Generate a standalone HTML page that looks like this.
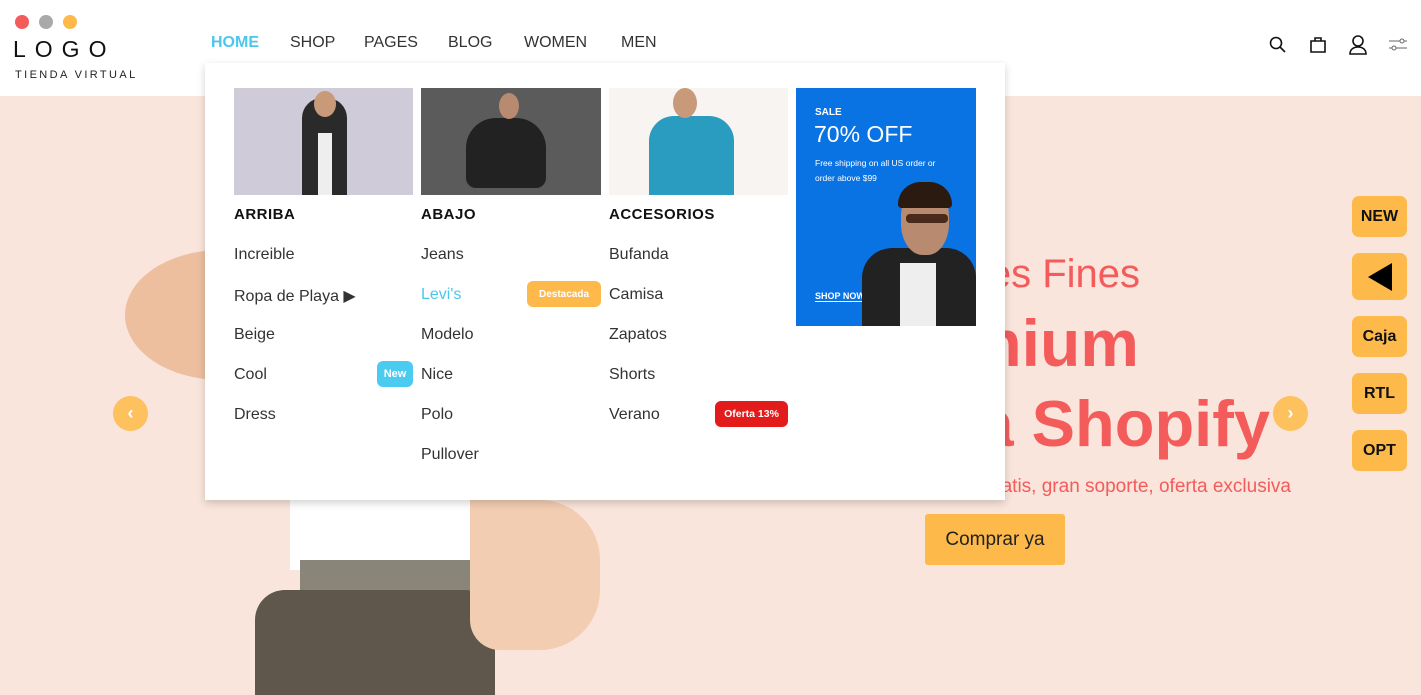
<!DOCTYPE html>
<html><head><meta charset="utf-8"><style>
*{margin:0;padding:0;box-sizing:border-box}
body{width:1421px;height:695px;overflow:hidden;position:relative;font-family:"Liberation Sans",sans-serif;background:#fff;color:#222}
.hero{position:absolute;left:0;top:96px;width:1421px;height:599px;background:#f9e5db}
.abs{position:absolute}
.nav a{position:absolute;top:34px;font-size:16px;color:#333;text-decoration:none;letter-spacing:0}
.red{color:#f45b5b;white-space:nowrap;text-align:right}
.side{position:absolute;left:1352px;width:55px;background:#fdb94a;border-radius:7px;font-weight:bold;font-size:16px;color:#111;display:flex;align-items:center;justify-content:center}
.drop{position:absolute;left:205px;top:63px;width:800px;height:437px;background:#fff;box-shadow:0 3px 8px rgba(0,0,0,.18)}
.col{position:absolute;top:0}
.col h4{position:absolute;top:143px;font-size:15px;font-weight:bold;color:#111;letter-spacing:.5px;white-space:nowrap}
.col div{position:absolute;font-size:16px;color:#333;white-space:nowrap}
.badge{position:absolute;display:flex;align-items:center;justify-content:center;font-size:11px;font-weight:bold;color:#fff;border-radius:6px;height:26px;white-space:nowrap}
.arrow{position:absolute;width:35px;height:35px;border-radius:50%;background:#fdc15d;color:#fff;font-weight:bold;font-size:18px;display:flex;align-items:center;justify-content:center}
</style></head><body>
<div class="hero"></div>
<div class="abs" style="left:125px;top:250px;width:160px;height:130px;background:#edbf9f;border-radius:60% 0 0 60%/50% 0 0 50%"></div>
<div class="abs" style="left:290px;top:490px;width:200px;height:80px;background:#fff"></div>
<div class="abs" style="left:300px;top:560px;width:180px;height:40px;background:#8a8579"></div>
<div class="abs" style="left:255px;top:590px;width:240px;height:105px;background:#5f564c;border-radius:30px 30px 0 0"></div>
<div class="abs" style="left:470px;top:500px;width:130px;height:150px;background:#f3cdb2;border-radius:0 60px 60px 30px"></div>

<div class="abs" style="left:15px;top:15px;width:14px;height:14px;border-radius:50%;background:#f45b5b"></div>
<div class="abs" style="left:39px;top:15px;width:14px;height:14px;border-radius:50%;background:#a9a9a9"></div>
<div class="abs" style="left:63px;top:15px;width:14px;height:14px;border-radius:50%;background:#fdb94a"></div>
<div class="abs" style="left:13px;top:36px;font-size:23px;letter-spacing:9px;color:#111">LOGO</div>
<div class="abs" style="left:15px;top:69px;font-size:11px;letter-spacing:2.4px;color:#222">TIENDA VIRTUAL</div>
<div class="nav">
<a style="left:211px;color:#4bc7ec;font-weight:bold">HOME</a>
<a style="left:290px">SHOP</a>
<a style="left:364px">PAGES</a>
<a style="left:448px">BLOG</a>
<a style="left:524px">WOMEN</a>
<a style="left:621px">MEN</a>
</div>
<svg class="abs" style="left:1268px;top:35px" width="20" height="20" viewBox="0 0 20 20" fill="none" stroke="#111" stroke-width="1.6"><circle cx="8" cy="8" r="5.5"/><path d="M12 12l5 5"/></svg>
<svg class="abs" style="left:1308px;top:34px" width="20" height="20" viewBox="0 0 20 20" fill="none" stroke="#111" stroke-width="1.6"><path d="M3 7h14v11H3z"/><path d="M7 7V4h6v3"/></svg>
<svg class="abs" style="left:1347px;top:34px" width="22" height="22" viewBox="0 0 22 22" fill="none" stroke="#111" stroke-width="1.6"><circle cx="11" cy="7" r="5"/><path d="M3 20c0-5 4-7 8-7s8 2 8 7z"/></svg>
<svg class="abs" style="left:1388px;top:37px" width="20" height="16" viewBox="0 0 20 16" fill="none" stroke="#666" stroke-width="1"><path d="M1 4h18M1 11h18"/><circle cx="14" cy="4" r="2" fill="#fff"/><circle cx="6" cy="11" r="2" fill="#fff"/></svg>

<div class="abs red" style="right:281px;top:252px;font-size:40px">Materiales Fines</div>
<div class="abs red" style="right:282px;top:305px;font-size:66px;font-weight:bold">Premium</div>
<div class="abs red" style="right:151px;top:386px;font-size:65px;font-weight:bold">Tema Shopify</div>
<div class="abs red" style="right:130px;top:476px;font-size:19px">Envío gratis, gran soporte, oferta exclusiva</div>
<div class="abs" style="left:925px;top:514px;width:140px;height:51px;background:#fdb94a;border-radius:3px;font-size:19px;color:#222;display:flex;align-items:center;justify-content:center">Comprar ya</div>
<div class="arrow" style="left:113px;top:396px">‹</div>
<div class="arrow" style="left:1273px;top:396px">›</div>

<div class="side" style="top:196px;height:41px">NEW</div>
<div class="side" style="top:253px;height:47px"><svg width="28" height="32"><path d="M2 16L26 2v28z" fill="#000"/></svg></div>
<div class="side" style="top:316px;height:41px">Caja</div>
<div class="side" style="top:373px;height:41px">RTL</div>
<div class="side" style="top:430px;height:41px">OPT</div>

<div class="drop">
 <div class="col" style="left:29px">
  <div style="top:25px;width:179px;height:107px;background:#cfcbd8"><div style="left:68px;top:10px;width:45px;height:97px;background:#2a2a2a;border-radius:20px 20px 0 0"></div><div style="left:80px;top:3px;width:22px;height:26px;background:#c99a7a;border-radius:50%"></div><div style="left:84px;top:45px;width:14px;height:62px;background:#eee"></div></div>
  <h4>ARRIBA</h4>
  <div style="top:183px">Increible</div>
  <div style="top:223px">Ropa de Playa ▶</div>
  <div style="top:263px">Beige</div>
  <div style="top:303px">Cool</div>
  <span class="badge" style="left:143px;top:298px;width:36px;background:#4ccbf0">New</span>
  <div style="top:343px">Dress</div>
 </div>
 <div class="col" style="left:216px">
  <div style="top:25px;width:180px;height:107px;background:#5b5b5b"><div style="left:45px;top:30px;width:80px;height:70px;background:#222;border-radius:30px 30px 10px 10px"></div><div style="left:78px;top:5px;width:20px;height:26px;background:#b88b70;border-radius:50%"></div></div>
  <h4>ABAJO</h4>
  <div style="top:183px">Jeans</div>
  <div style="top:223px;color:#4bc7ec">Levi's</div>
  <span class="badge" style="left:106px;top:218px;width:74px;background:#fdb94a;font-size:10px">Destacada</span>
  <div style="top:263px">Modelo</div>
  <div style="top:303px">Nice</div>
  <div style="top:343px">Polo</div>
  <div style="top:383px">Pullover</div>
 </div>
 <div class="col" style="left:404px">
  <div style="top:25px;width:179px;height:107px;background:#f7f4f2"><div style="left:40px;top:28px;width:85px;height:79px;background:#2a9cc0;border-radius:25px 25px 0 0"></div><div style="left:64px;top:0px;width:24px;height:30px;background:#c99a7a;border-radius:50%"></div></div>
  <h4>ACCESORIOS</h4>
  <div style="top:183px">Bufanda</div>
  <div style="top:223px">Camisa</div>
  <div style="top:263px">Zapatos</div>
  <div style="top:303px">Shorts</div>
  <div style="top:343px">Verano</div>
  <span class="badge" style="left:106px;top:338px;width:73px;background:#e41b1b;font-size:10.5px">Oferta 13%</span>
 </div>
 <div class="col" style="left:591px;top:25px;width:180px;height:238px;background:#0a73e3;overflow:hidden">
  <div style="left:19px;top:19px;font-size:10px;color:#fff;font-weight:bold">SALE</div>
  <div style="left:18px;top:33px;font-size:23px;color:#fff">70% OFF</div>
  <div style="left:19px;top:68px;font-size:8.5px;color:#fff;line-height:15px">Free shipping on all US order or<br>order above $99</div>
  <div style="left:19px;top:203px;font-size:9px;color:#fff;font-weight:bold;border-bottom:1px solid #fff">SHOP NOW!</div>
  <div style="left:66px;top:160px;width:114px;height:80px;background:#222;border-radius:30px 30px 0 0"></div>
  <div style="left:104px;top:175px;width:36px;height:63px;background:#eee"></div>
  <div style="left:105px;top:97px;width:48px;height:70px;background:#b88b70;border-radius:45%"></div>
  <div style="left:102px;top:94px;width:54px;height:26px;background:#2a1a10;border-radius:25px 25px 4px 4px"></div>
  <div style="left:110px;top:126px;width:42px;height:9px;background:#4a2a1a;border-radius:4px"></div>
 </div>
</div>
</body></html>
